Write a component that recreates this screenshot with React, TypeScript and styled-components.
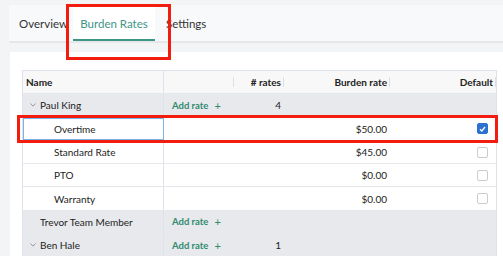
import styled, { createGlobalStyle } from 'styled-components';

const Global = createGlobalStyle`
    html, body {
        margin: 0;
        padding: 0;
        background: #f3f4f6;
        font-family: Lato, "Noto Sans", sans-serif;
        color: #222;
    }
`;

const Page = styled.div`
    position: relative;
    width: 503px;
    height: 256px;
    overflow: hidden;
    padding: 5px 0 0 9px;
    box-sizing: border-box;
`;

const TabBar = styled.div`
    display: flex;
    height: 36px;
    background: #f8f9fb;
    border-bottom: 2px solid #e5e7eb;
    padding-left: 10px;
`;

const Tab = styled.div<{ $active?: boolean; $w: number }>`
    display: flex;
    align-items: center;
    justify-content: ${p => (p.$active ? 'center' : 'flex-start')};
    width: ${p => p.$w}px;
    height: 100%;
    font-size: 11.5px;
    color: ${p => (p.$active ? '#3d9585' : '#333')};
    background: ${p => (p.$active ? '#fff' : 'transparent')};
    box-shadow: ${p => (p.$active ? 'inset 0 -2px 0 #3d9585' : 'none')};
    margin-right: ${p => (p.$active ? 11 : 0)}px;
    box-sizing: border-box;
`;

const Card = styled.div`
    margin-top: 9px;
    margin-left: 1px;
    background: #fff;
    height: 220px;
    padding: 18px 0 0 12px;
    box-sizing: border-box;
`;

const Table = styled.div`
    width: 473px;
    border: 1px solid #dde2eb;
    border-bottom: none;
    font-size: 10px;
`;

const Row = styled.div<{ $kind: 'head' | 'group' | 'child' }>`
    display: grid;
    grid-template-columns: 141px 70px 50px 106px 106px;
    height: 23.3px;
    box-sizing: border-box;
    border-bottom: 1px solid #e4e7ec;
    background: ${p => (p.$kind === 'head' ? '#f8f8f8' : p.$kind === 'group' ? '#e8e9ed' : '#fff')};
    font-weight: ${p => (p.$kind === 'head' ? 700 : 400)};
`;

const Cell = styled.div<{ $align?: 'left' | 'right'; $pad?: number; $pinned?: boolean; $sep?: boolean }>`
    position: relative;
    display: flex;
    align-items: center;
    justify-content: ${p => (p.$align === 'right' ? 'flex-end' : 'flex-start')};
    padding-left: ${p => p.$pad ?? 0}px;
    padding-right: ${p => (p.$align === 'right' ? 3 : 0)}px;
    border-right: ${p => (p.$pinned ? '1px solid #dde2eb' : 'none')};
    box-sizing: border-box;
    white-space: nowrap;
    &::after {
        content: '';
        display: ${p => (p.$sep ? 'block' : 'none')};
        position: absolute;
        right: 0;
        top: 6px;
        bottom: 6px;
        width: 1px;
        background: #dcdfe4;
    }
`;

const Focused = styled(Cell)`
    outline: 1px solid #7ab3ea;
    outline-offset: -1px;
`;

const Chevron = styled.svg`
    margin-right: 4px;
`;

const AddRate = styled.span`
    color: #2f8a6f;
    font-size: 9.5px;
    font-weight: 700;
    display: flex;
    align-items: center;
    gap: 6px;
`;

const Plus = styled.span`
    font-weight: 400;
    font-size: 11px;
`;

const Box = styled.span<{ $checked?: boolean }>`
    width: 11px;
    height: 11px;
    margin-right: 5px;
    box-sizing: border-box;
    border-radius: 2px;
    border: 1px solid ${p => (p.$checked ? '#2c70d2' : '#c9ccd1')};
    background: ${p => (p.$checked ? '#2c70d2' : '#fff')};
    display: flex;
    align-items: center;
    justify-content: center;
`;

const Highlight = styled.div<{ $x: number; $y: number; $w: number; $h: number }>`
    position: absolute;
    left: ${p => p.$x}px;
    top: ${p => p.$y}px;
    width: ${p => p.$w}px;
    height: ${p => p.$h}px;
    border: 3px solid #f21c0f;
    box-sizing: border-box;
    pointer-events: none;
`;

type Child = { name: string; rate: string; def: boolean; focus?: boolean };
type Group = { name: string; count?: string; open?: boolean; children: Child[] };

const groups: Group[] = [
    {
        name: 'Paul King',
        count: '4',
        open: true,
        children: [
            { name: 'Overtime', rate: '$50.00', def: true, focus: true },
            { name: 'Standard Rate', rate: '$45.00', def: false },
            { name: 'PTO', rate: '$0.00', def: false },
            { name: 'Warranty', rate: '$0.00', def: false },
        ],
    },
    { name: 'Trevor Team Member', children: [] },
    { name: 'Ben Hale', count: '1', open: true, children: [] },
];

const Check = () => (
    <svg width="7" height="6" viewBox="0 0 7 6">
        <path d="M1 3.2 L2.8 5 L6 1" fill="none" stroke="#fff" strokeWidth="1.3" />
    </svg>
);

const App = () => {
    return (
        <Page>
            <Global />
            <TabBar>
                <Tab $w={54}>Overview</Tab>
                <Tab $w={82} $active>Burden Rates</Tab>
                <Tab $w={60}>Settings</Tab>
            </TabBar>
            <Card>
                <Table>
                    <Row $kind="head">
                        <Cell $pad={3} $pinned>Name</Cell>
                        <Cell $sep />
                        <Cell $align="right" $sep># rates</Cell>
                        <Cell $align="right" $sep>Burden rate</Cell>
                        <Cell $align="right" $sep>Default</Cell>
                    </Row>
                    {groups.map(g => (
                        <div key={g.name}>
                            <Row $kind="group">
                                <Cell $pad={g.open ? 7 : 17} $pinned>
                                    {g.open && (
                                        <Chevron width="6" height="4" viewBox="0 0 6 4">
                                            <path d="M0.5 0.5 L3 3.2 L5.5 0.5" fill="none" stroke="#8a8f98" strokeWidth="0.9" />
                                        </Chevron>
                                    )}
                                    {g.name}
                                </Cell>
                                <Cell $pad={8}>
                                    <AddRate>Add rate <Plus>+</Plus></AddRate>
                                </Cell>
                                <Cell $align="right">{g.count}</Cell>
                                <Cell />
                                <Cell />
                            </Row>
                            {g.children.map(c => {
                                const NameCell = c.focus ? Focused : Cell;
                                return (
                                    <Row $kind="child" key={c.name}>
                                        <NameCell $pad={31} $pinned>{c.name}</NameCell>
                                        <Cell />
                                        <Cell />
                                        <Cell $align="right">{c.rate}</Cell>
                                        <Cell $align="right">
                                            <Box $checked={c.def}>{c.def && <Check />}</Box>
                                        </Cell>
                                    </Row>
                                );
                            })}
                        </div>
                    ))}
                </Table>
            </Card>
            <Highlight $x={66} $y={4} $w={105} $h={56} />
            <Highlight $x={17} $y={115} $w={481} $h={28} />
        </Page>
    );
};

export default App;
